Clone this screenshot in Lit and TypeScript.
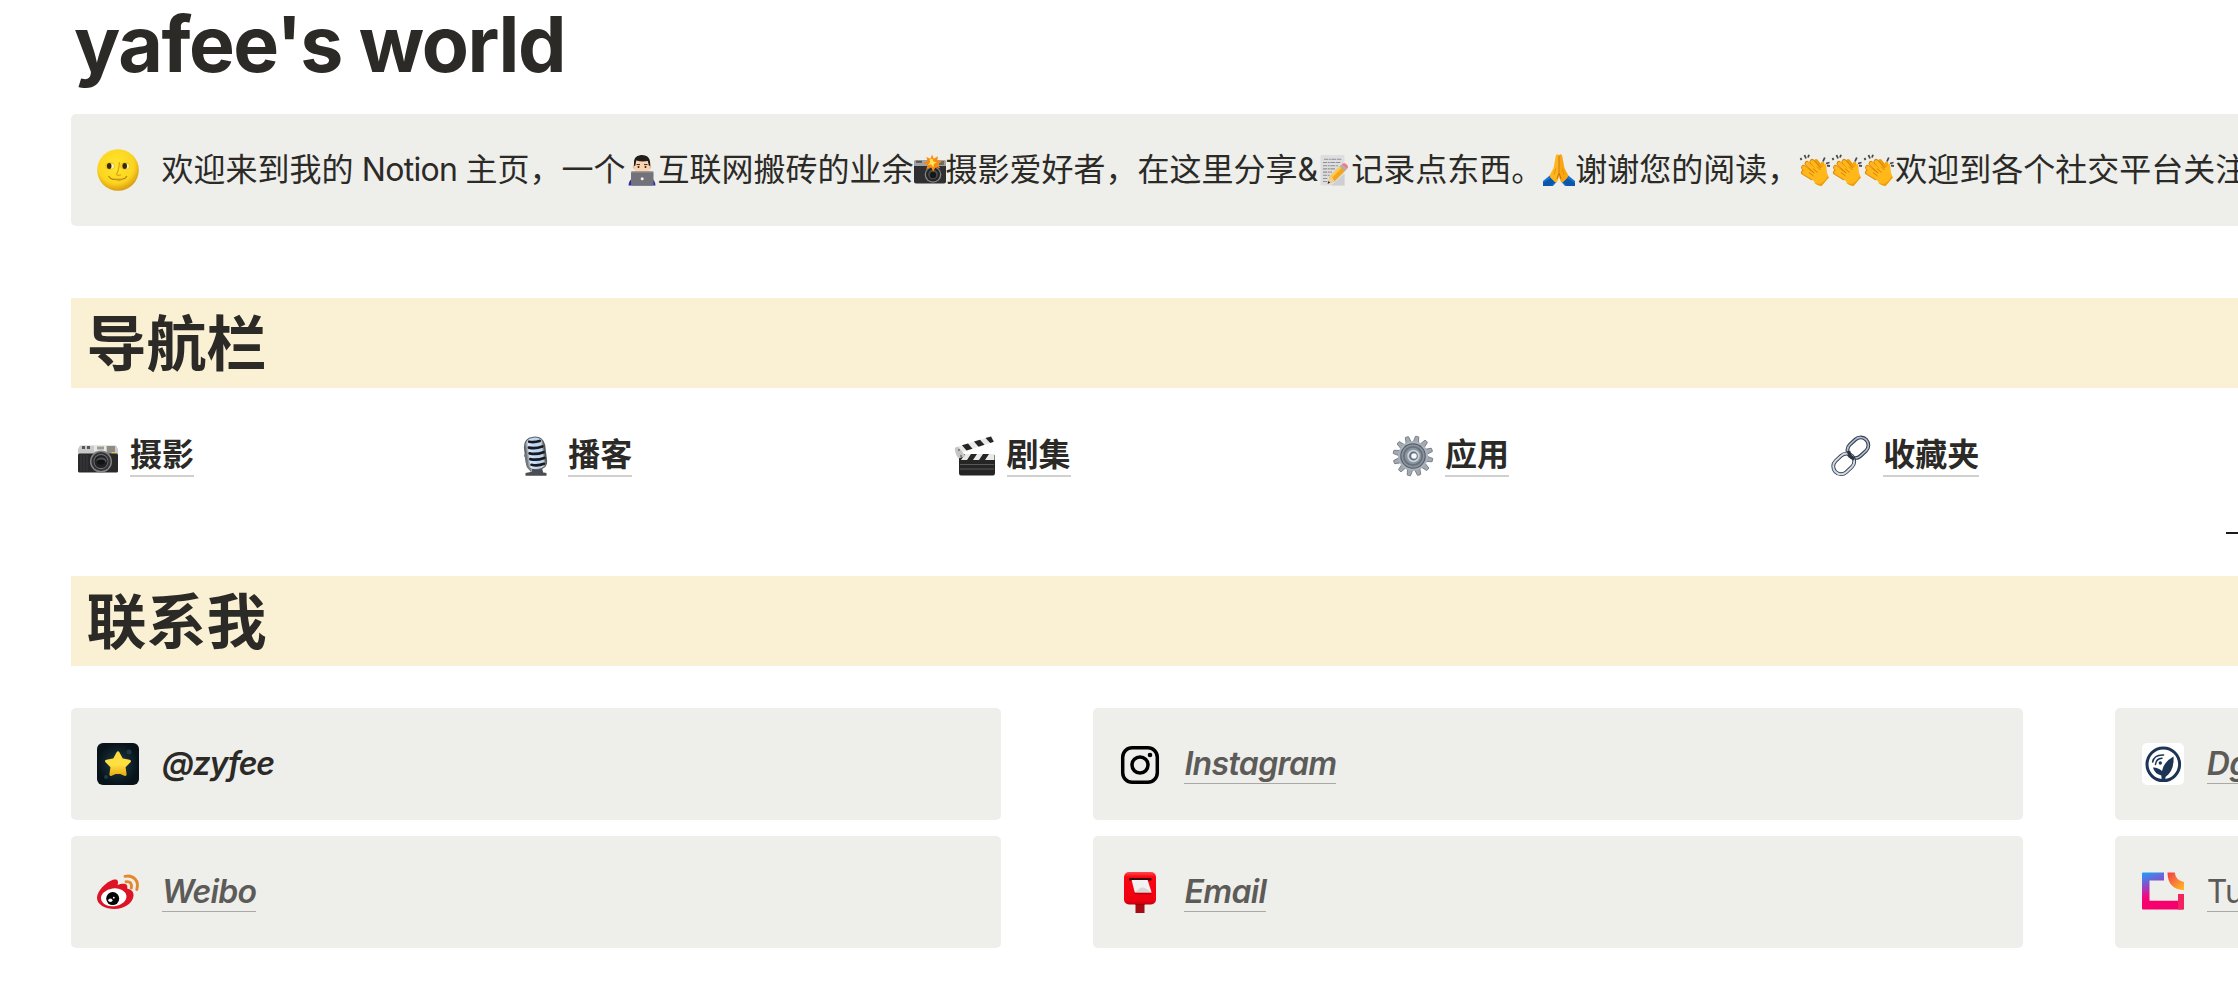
import { LitElement, html, svg, css, TemplateResult } from "lit";
import { customElement, property } from "lit/decorators.js";

const moon = svg`<svg viewBox="0 0 42 42">
  <defs><radialGradient id="moon" cx=".45" cy=".38" r=".62"><stop offset="0" stop-color="#ffe62e"/><stop offset=".7" stop-color="#fbd51f"/><stop offset="1" stop-color="#d99c10"/></radialGradient></defs>
  <circle cx="21" cy="21" r="20.8" fill="url(#moon)"/>
  <ellipse cx="13" cy="17" rx="5.200" ry="4" fill="#edbd1d" opacity=".6"/><ellipse cx="28" cy="17" rx="5" ry="4" fill="#edbd1d" opacity=".6"/>
  <ellipse cx="13.500" cy="17.200" rx="3.400" ry="2.400" fill="#fbf3cf"/><ellipse cx="28.800" cy="17.200" rx="3.200" ry="2.400" fill="#fbf3cf"/>
  <ellipse cx="12.200" cy="17" rx="2.300" ry="2.900" fill="#3a2608"/><ellipse cx="27.700" cy="17" rx="2.300" ry="2.900" fill="#3a2608"/>
  <path d="M22.500 13q-.5 8-3 12.500 2 1.600 4.500.2" stroke="#dda716" stroke-width="1.300" fill="none"/>
  <path d="M11.500 27q2 3.500 6 3.300h7q3.500 0 5.500-3.300" stroke="#b9800f" stroke-width="1.200" fill="none"/>
  <path d="M17.500 30.500q5 3.500 8 0z" fill="#eaa42c"/>
</svg>`;

const technologist = svg`<svg viewBox="0 0 32 32">
  <path d="M2.500 31.500q.5-6 4.500-7h18q4 1 4.500 7z" fill="#2b2aa8"/>
  <ellipse cx="8.300" cy="12.500" rx="1.500" ry="2.500" fill="#efb98d"/><ellipse cx="23.700" cy="12.500" rx="1.500" ry="2.500" fill="#efb98d"/>
  <path d="M8.500 7h15v9q-1 6-7.500 6t-7.500-6z" fill="#fbd5b0"/>
  <path d="M8 12Q6.500 1.500 15 1q10-.5 9.200 11l-1.400-.5-1-4.500q-6 1-11.500-.500l-1 5z" fill="#221d1b"/>
  <path d="M10.500 10.600h3.500M18 10.600h3.500" stroke="#3b2920" stroke-width="1"/>
  <circle cx="12.500" cy="13" r="1" fill="#322018"/><circle cx="19.500" cy="13" r="1" fill="#322018"/>
  <rect x="5" y="17.500" width="22.500" height="14" rx="1.200" fill="#727278"/><rect x="5" y="17.500" width="22.500" height="1" rx=".5" fill="#94949a"/>
  <circle cx="16.200" cy="24.800" r="1.500" fill="#f2f2f4"/>
</svg>`;

const flash = svg`<svg viewBox="0 0 32 32">
  <rect x="0" y="6.500" width="32" height="23" rx="2" fill="#2f2f31"/><path d="M0 12V8q0-2 2-2h28q2 0 2 2v4z" fill="#a2a2a2"/>
  <path d="M2 6.800h6v2H2z" fill="#555"/><path d="M25 7h5v4h-5z" fill="#766a5a"/>
  <circle cx="19" cy="20.500" r="8.300" fill="#868686"/><circle cx="19" cy="20.500" r="7" fill="#252526"/><circle cx="19" cy="20.500" r="4.800" fill="#4b4d50"/><circle cx="19" cy="21" r="3.200" fill="#161617"/>
  <path d="M18 .5l1.800 4.200L24 2.300l-.8 4.500 4.800.8-4.300 2.600 2.500 4-4.500-1.300-2.500 4.600-2.300-4.500-4.700 2.200 1.500-4.600-5-1.700 5-1.500-1.400-4.500 4.200 1.900z" fill="#fb8a0b"/>
  <path d="M18.300 4.500l1.200 3 3.200.800-2.800 1.700-.6 3.400-2-2.900-3.200.200 2.100-2.500-.8-2.400z" fill="#ffe35b"/>
</svg>`;

const memo = svg`<svg viewBox="0 0 32 32">
  <path d="M2.500 1h22q1 0 1 1v29.500h-24V2q0-1 1-1z" fill="#dededf"/><path d="M25.500 20v11.500H12z" fill="#cfcfd2"/>
  <g stroke="#8f8f94" stroke-width="1.100" stroke-dasharray="4 .7 2 .6 5 .8"><path d="M5 5.300h18M4 8.500h18M4 11.700h15M4 14.900h12M4 18.100h9M4 21.300h7M4 24.500h5M4 27.500h5"/></g>
  <path d="M8.600 29.800l2.200-7.200L22 11.200l5.200 4.500-11.500 11.500z" fill="#f5a61b"/><path d="M10.800 22.600L22 11.200l1.800 1.600-11 11.500z" fill="#ffc94e"/>
  <path d="M8.600 29.800l2.200-7.200q3 1 4.900 4.600z" fill="#efce9c"/><path d="M8.600 29.800l.9-2.700 1.600 1.600z" fill="#222"/>
  <path d="M20.700 12.500l2-2 5.200 4.500-2 2z" fill="#a9b1b5"/><path d="M22.700 10.500q2.500-2.500 5 0t.2 4.500z" fill="#ee7c86"/>
</svg>`;

const pray = svg`<svg viewBox="0 0 32 32">
  <path d="M0 27l8-6.500 6 7-4 4.500H0zM32 27l-8-6.500-6 7 4 4.500h10z" fill="#1a70cc"/>
  <path d="M0 29l8-5 4 4-4 4H0zM32 29l-8-5-4 4 4 4h8z" fill="#0b57ab"/>
  <path d="M15.800 1Q13.500-1 12.700 2.200L10.600 14 7 20.800q-.7 1.700.8 3.300l4 4q1.500.9 2.600-.8l1.400-4.300z" fill="#ffb51c"/>
  <path d="M16.200 1Q18.500-1 19.300 2.200L21.400 14l3.600 6.800q.7 1.700-.8 3.300l-4 4q-1.500.9-2.600-.8L16.200 23z" fill="#fba50f"/>
  <path d="M16 1.500V19l-2 6M16 19l2 6" stroke="#ce7609" stroke-width="1.100" fill="none"/><path d="M12.700 14.500l-1.500 6M19.300 14.500l1.500 6" stroke="#dd8b0b" stroke-width=".8" fill="none"/>
</svg>`;

const clap = svg`<svg viewBox="0 0 32 32">
  <g stroke="#45484b" stroke-width="1.800"><path d="M1.500 4l1 2M5.500 1l1.500 3.500M10 .8L9 3.500M24 7.500l1.800-4M27 9.500l3.500-1M28 11.500l3 .6"/></g>
  <g stroke-linecap="round" fill="none"><path d="M17 7l8 10" stroke="#ef9a08" stroke-width="4"/><path d="M23.500 9.500l2.500 9" stroke="#f6a90d" stroke-width="3.600"/>
  <g stroke="#dd8609" stroke-width="5"><path d="M4.500 18.500l8 5M4.500 13.500l11 9M8 9.500l11 10M13 7.500l9 10"/></g>
  <g stroke="#ffb719" stroke-width="3.700"><path d="M5 18.500l8 5M4.800 13.700l11 9M8.300 9.700l11 10M13.200 8l9 10"/></g></g>
  <path d="M11 22.500L22 13.500l1.500.2q1.600-5 3.500-3.200.7 3.500.6 7.500l2.300 5.500L22.500 32q-3-.2-6-2.500z" fill="#ffb719"/>
  <path d="M10 18.500l4.500 3.500M14 14.500l4.500 4M18 12.500l3.500 3.500" stroke="#c87f10" stroke-width=".9"/><path d="M29.700 23.500L22.500 32q-4-.2-8-3.500 5 2.200 8 .8 4-2.300 6-7z" fill="#ee9c0d"/>
</svg>`;

const camera = svg`<svg viewBox="0 0 40 40">
  <path d="M2 9.500h36l2 3.500v5H0v-5z" fill="#c9c9c8"/><path d="M16 9.200h12v6H16z" fill="#e8e8e4"/><path d="M19 10.500h7v3h-7z" fill="#9c9d96"/>
  <path d="M4 10h3v3H4zM9 10h3v3H9z" fill="#57575a"/><path d="M29 10h8v8h-8z" fill="#8d8b83"/><path d="M33.500 16h3.500v3h-3.500z" fill="#e4c13e"/>
  <rect y="17.500" width="40" height="19" rx="1.500" fill="#29292b"/><path d="M3 19v16M6 19v16M9 19v16" stroke="#3c3c3f" stroke-width="1"/>
  <circle cx="23" cy="25.500" r="11" fill="#858587"/><circle cx="23" cy="25.500" r="9.600" fill="#343436"/><circle cx="23" cy="25.500" r="7.400" fill="#77777a"/><circle cx="23" cy="25.500" r="6.600" fill="#202123"/>
  <ellipse cx="23.500" cy="24.500" rx="5" ry="3" fill="#4f5358"/><ellipse cx="23" cy="26" rx="4" ry="2.400" fill="#111214"/>
</svg>`;

const microphone = svg`<svg viewBox="0 0 40 40">
  <defs><linearGradient id="mic"><stop stop-color="#5c6066"/><stop offset=".2" stop-color="#dce9f5"/><stop offset=".5" stop-color="#b9d6f8"/><stop offset=".85" stop-color="#c5d2df"/><stop offset="1" stop-color="#46484e"/></linearGradient></defs>
  <path d="M9.500 37q10-2.500 21 0v2.700h-21zM16 32h10l1.500 6h-12z" fill="#4c4d52"/>
  <g transform="rotate(-7 20 20)">
    <path d="M9 10Q10 .5 19.500.5T30.500 10v16q0 8-10.500 8T9 26z" fill="#5b5f66"/>
    <path d="M10 10Q11 1.500 19.500 1.500T29.500 10v16q0 7-9.500 7T10 26z" fill="url(#mic)"/>
    <g stroke="#171a20" stroke-width="2.700" fill="none" stroke-linecap="round"><path d="M15 5q5 1.500 10.500.5M14 10.800q6 2.200 13.500.5M14 16.600q6 2.400 14 .5M14 22.400q6 2.400 14 .5M14.500 28.200q6 2.200 12.500.5"/></g>
  </g>
  <path d="M9 18l2.500 13 4 4.500M8 20l3-.500" stroke="#74777b" stroke-width="1.500" fill="none"/>
</svg>`;

const clapper = svg`<svg viewBox="0 0 40 40">
  <path d="M4 19h36v18q0 2.500-2 2.500H6q-2 0-2-2.500z" fill="#252526"/>
  <path d="M4 18h35.500v6H4z" fill="#e9e9e7"/><path d="M12 24l4-6h6l-4 6zM24 24l4-6h6l-4 6zM4 24v-4l1.500-2H10l-4 6z" fill="#252526"/>
  <path d="M1 11L37 .2l1.800 5.600L3 17.500z" fill="#e9e9e7"/><path d="M7 9.200l6-1.800 4.500 5.300-6 1.900zM19 5.600l6-1.800 4.500 5-6 2zM30.500 2.100l5.500-1.700 2.800 5.300-3.600 1.200z" fill="#252526"/>
  <path d="M0 11.500l3.500-.500 7 9-7 2.500q-4-5-3.500-11z" fill="#c5c5c3"/><circle cx="4" cy="14" r=".9" fill="#666"/><circle cx="6" cy="20" r=".9" fill="#666"/>
  <path d="M5 28.500h34M5 33h34" stroke="#66666a" stroke-width=".8"/>
</svg>`;

const teeth = Array.from({ length: 12 }, (_, i) =>
  svg`<path d="M17.300 6.500L18.300.2q1.700-.5 3.400 0l1 6.300z" fill="#a3a9b0" stroke="#646b74" stroke-width=".7" transform=${`rotate(${i * 30 + 12} 20 20)`}/>`);
const gear = svg`<svg viewBox="0 0 40 40">
  ${teeth}
  <circle cx="20" cy="20" r="15" fill="#a9b1ba"/><circle cx="20" cy="20" r="12.800" fill="#59616b"/><circle cx="20" cy="20" r="11.600" fill="#8a949f"/>
  <circle cx="20" cy="20" r="9.200" fill="none" stroke="#69727c" stroke-width="1.800"/>
  <circle cx="20.500" cy="20" r="6.200" fill="#c6d2dd"/><circle cx="20.500" cy="20" r="4.400" fill="#666f79"/><circle cx="21" cy="20" r="2.800" fill="#f7f8f9"/>
</svg>`;

const chain = svg`<svg viewBox="0 0 40 40">
  <g fill="none">
    <rect x="15.600" y="4" width="23" height="15.500" rx="7.700" transform="rotate(-43 27 12)" stroke="#343f51" stroke-width="3.800"/>
    <rect x="15.600" y="4" width="23" height="15.500" rx="7.700" transform="rotate(-43 27 12)" stroke="#b4c0cf" stroke-width="1.600"/>
    <rect x="1.400" y="20" width="23" height="15.500" rx="7.700" transform="rotate(-43 13 28)" stroke="#343f51" stroke-width="3.800"/>
    <rect x="1.400" y="20" width="23" height="15.500" rx="7.700" transform="rotate(-43 13 28)" stroke="#d2dbe5" stroke-width="2"/>
    <path d="M17.500 15q1 6 6 8" stroke="#2d3442" stroke-width="3.500"/>
  </g>
</svg>`;

const star = svg`<svg viewBox="0 0 42 42">
  <defs><radialGradient id="night"><stop stop-color="#244650"/><stop offset=".55" stop-color="#12262f"/><stop offset="1" stop-color="#071219"/></radialGradient>
  <linearGradient id="gold" x2="0" y2="1"><stop stop-color="#ffdc38"/><stop offset=".55" stop-color="#ffe044"/><stop offset="1" stop-color="#eab012"/></linearGradient></defs>
  <rect width="42" height="42" rx="6" fill="url(#night)"/><circle cx="9" cy="34" r="2" fill="#1d5665" opacity=".6"/><circle cx="32" cy="9" r="2.500" fill="#2b4450" opacity=".7"/>
  <path d="M21 10l3.600 6.800 7.700 1.400-5.400 5.500 1.100 7.700-7-3.200-7 3.200 1.100-7.700-5.400-5.500 7.700-1.400z" fill="url(#gold)" stroke="url(#gold)" stroke-width="3.200" stroke-linejoin="round"/>
</svg>`;

const weibo = svg`<svg viewBox="0 0 42 42">
  <path d="M16 8.800c4-1.300 6 .7 4.600 5.200 5-2 11-2 9.600 3.500 4 1.200 6.800 3.300 6.300 7.500C35.500 32.500 27 38 17.500 38S0 33.500 0 27C0 20 9 11 16 8.800z" fill="#dd1426"/>
  <ellipse cx="16.700" cy="26.300" rx="12.800" ry="8.900" transform="rotate(-7 16.700 26.300)" fill="#fff"/>
  <circle cx="15.700" cy="27.600" r="6.500" fill="#050505"/><ellipse cx="13.400" cy="29.300" rx="2.100" ry="1.800" fill="#fff"/><circle cx="16.800" cy="26.700" r=".9" fill="#fff"/>
  <path d="M28 5.300C36.500 3.500 42.500 10 39.800 18.500M29 10.700q6.500-.6 5.300 6.300" fill="none" stroke="#e5882d" stroke-width="2.900" stroke-linecap="round"/>
</svg>`;

const instagram = svg`<svg viewBox="0 0 42 42">
  <rect x="3.700" y="4.700" width="34.600" height="34.600" rx="9.500" fill="none" stroke="#000" stroke-width="3.500"/>
  <circle cx="21" cy="22" r="8" fill="none" stroke="#000" stroke-width="3.500"/><circle cx="31" cy="12" r="2.300" fill="#000"/>
</svg>`;

const postbox = svg`<svg viewBox="0 0 42 42">
  <defs><linearGradient id="box" x2="0" y2="1"><stop stop-color="#ff4a4f"/><stop offset=".15" stop-color="#fa0612"/><stop offset=".88" stop-color="#ee0010"/><stop offset="1" stop-color="#c1000c"/></linearGradient></defs>
  <path d="M16.500 30h9v12h-9z" fill="#a40b12"/><path d="M16.500 30h9v4h-9z" fill="#6e0509"/>
  <rect x="5" y="1" width="32" height="32.500" rx="5" fill="url(#box)"/><rect x="10" y="7" width="22.500" height="2.600" rx="1.200" fill="#3b090c"/>
  <path d="M15 21l18 1.500-1 1-16-.5z" fill="#b6000b"/><path d="M12.600 9h16l4 12.500H15.800z" fill="#f3f1f2"/><path d="M15.800 21.200q5-4.800 7.700-4.800t9 4.800z" fill="#d8d4d7"/>
</svg>`;

const dgtle = svg`<svg viewBox="0 0 42 42">
  <rect width="42" height="42" rx="5" fill="#fff"/><circle cx="21.300" cy="21.300" r="16.300" fill="none" stroke="#1c3554" stroke-width="3"/>
  <path d="M31.500 13.500q1 14-8 20.500l-.4 4h-3.300l-.5-5.500q-7-2-8.300-8 5-.2 9 3.500 1.500-9 11.500-14.500z" fill="#1c3554"/>
  <circle cx="18.300" cy="20" r="1.700" fill="#1c3554"/><path d="M13.500 21.500q.5-6 6.500-6.300M10.600 19q1.500-7.500 11-7" fill="none" stroke="#1c3554" stroke-width="1.500" stroke-linecap="round"/>
</svg>`;

const tuchong = svg`<svg viewBox="0 0 42 42">
  <defs><linearGradient id="frame" x1=".1" y1="0" x2=".35" y2=".7"><stop stop-color="#2499f5"/><stop offset=".45" stop-color="#8b4cc8"/><stop offset=".8" stop-color="#f20b83"/><stop offset="1" stop-color="#f6006d"/></linearGradient>
  <linearGradient id="corner" y2="1"><stop stop-color="#f43b48"/><stop offset="1" stop-color="#ffc024"/></linearGradient></defs>
  <path d="M1 1.500h21v8H7.500v20.300h29V23H42v14.500q0 1-1 1H1q-1 0-1-1v-35q0-1 1-1z" fill="url(#frame)"/>
  <path d="M36 23h6v14.500q0 1-1 1h-5z" fill="#f2245f"/>
  <path d="M25.500 1.500h7.300q.7 8 9.200 9.500v8.200Q25.500 18 25.500 1.500z" fill="url(#corner)"/>
</svg>`;

@customElement("page-callout")
class PageCallout extends LitElement {
  @property({ attribute: false }) icon?: TemplateResult;

  static styles = css`
    :host { display: flex; align-items: center; box-sizing: border-box; height: 111.500px; padding-left: 26.500px; gap: 23px; border-radius: 5px; background: #eeeeeb; white-space: nowrap; }
    .icon { width: 42px; height: 42px; flex: none; }
    .icon svg { display: block; width: 42px; height: 42px; overflow: visible; }
  `;

  render() {
    return html`<div class="icon">${this.icon}</div><slot></slot>`;
  }
}

@customElement("app-root")
class AppRoot extends LitElement {
  private nav = [
    { icon: camera, label: "摄影" },
    { icon: microphone, label: "播客" },
    { icon: clapper, label: "剧集" },
    { icon: gear, label: "应用" },
    { icon: chain, label: "收藏夹" },
  ];

  private contacts = [
    { icon: star, label: "@zyfee", style: "handle" },
    { icon: instagram, label: "Instagram", style: "link strong" },
    { icon: dgtle, label: "Dgtle", style: "link strong" },
    { icon: weibo, label: "Weibo", style: "link strong" },
    { icon: postbox, label: "Email", style: "link strong" },
    { icon: tuchong, label: "Tuchong", style: "link" },
  ];

  static styles = css`
    :host { display: block; box-sizing: border-box; height: 1004px; padding-left: 70.500px; overflow: hidden; background: #fff; color: #2b2a27; font-family: Inter, "Noto Sans CJK SC", sans-serif; font-size: 32px; }
    h1, h2 { margin: 0; font-weight: 700; white-space: nowrap; }
    h1 { height: 114px; padding-left: 3.500px; line-height: 88px; font-size: 77px; letter-spacing: -1.450px; }
    h2 { box-sizing: border-box; height: 89.500px; padding-left: 16px; line-height: 84px; font-size: 60px; font-family: "Noto Sans CJK SC", sans-serif; background: #faf0d3; }
    .body { width: 2975.200px; }
    .intro { margin: -2px 0 0 -.5px; font-family: "Noto Sans CJK SC", sans-serif; line-height: 48px; }
    .latin { font-family: Inter, sans-serif; }
    .name { letter-spacing: -.700px; }
    .amp { margin-right: 1px; }
    .emoji { display: inline-block; width: 32px; height: 32px; vertical-align: -5px; }
    .emoji svg { display: block; width: 32px; height: 32px; overflow: visible; }
    .section { margin-top: 72.500px; }
    .nav { display: grid; grid-template-columns: repeat(5, 438.300px); height: 144.500px; box-sizing: border-box; padding: 46.500px 0 0 7.500px; }
    .item { display: flex; align-items: flex-start; gap: 12px; }
    .item svg { width: 40px; height: 40px; margin-top: 2px; overflow: visible; }
    .item a { height: 41px; line-height: 37px; border-bottom: 2px solid #d0d0ce; font-family: "Noto Sans CJK SC", sans-serif; font-weight: 700; }
    .rule { width: 300px; height: 2px; margin: 0 0 42px 2155.500px; background: #1b1a18; }
    .contacts { display: grid; grid-template-columns: repeat(3, 930.400px); gap: 16.500px 92px; margin-top: 42.500px; }
    .handle, .strong { font-weight: 600; font-style: italic; letter-spacing: -.650px; }
    .handle { letter-spacing: -1.150px; }
    .link { height: 38px; margin-bottom: -2px; line-height: 38px; color: #5c5b58; border-bottom: 1.500px solid #aaa9a6; }
  `;

  render() {
    const e = (icon: TemplateResult) => html`<span class="emoji">${icon}</span>`;
    return html`
      <h1>yafee's world</h1>
      <div class="body">
        <page-callout .icon=${moon}><div class="intro">欢迎来到我的<span class="latin name"> Notion </span>主页，一个${e(technologist)}互联网搬砖的业余${e(flash)}摄影爱好者，在这里分享<span class="latin amp">&amp;</span>${e(memo)}记录点东西。${e(pray)}谢谢您的阅读，${e(clap)}${e(clap)}${e(clap)}欢迎到各个社交平台关注</div></page-callout>
        <h2 class="section">导航栏</h2>
        <nav class="nav">${this.nav.map((n) => html`<div class="item">${n.icon}<a>${n.label}</a></div>`)}</nav>
        <div class="rule"></div>
        <h2>联系我</h2>
        <div class="contacts">
          ${this.contacts.map((c) => html`<page-callout .icon=${c.icon}><span class=${c.style}>${c.label}</span></page-callout>`)}
        </div>
      </div>
    `;
  }
}
